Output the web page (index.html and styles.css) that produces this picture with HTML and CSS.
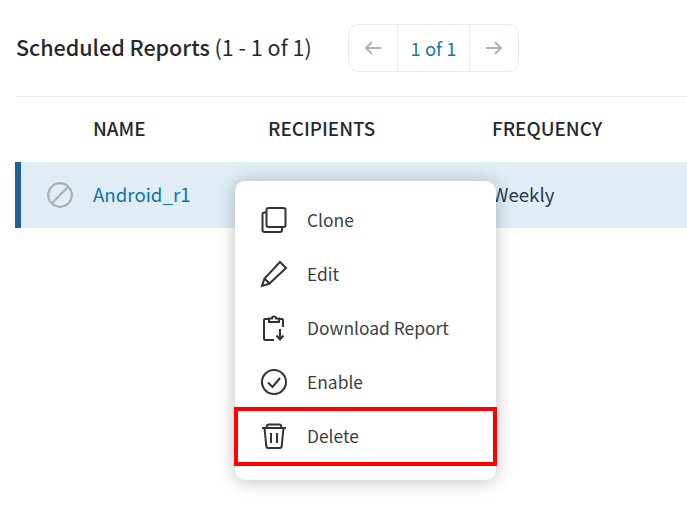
FILE: index.html
```
<!DOCTYPE html>
<html lang="en">
<head>
<meta charset="utf-8">
<title>Scheduled Reports</title>
<link rel="stylesheet" href="styles.css">
</head>
<body>
<div class="page">
  <header class="top">
    <h1 class="title">Scheduled Reports <span class="count">(1 - 1 of 1)</span></h1>
    <nav class="pager">
      <span class="pager-btn"><svg width="20" height="16" viewBox="0 0 20 16"><path d="M18 8H3M9 2 3 8l6 6" fill="none" stroke="#adb5bb" stroke-width="2"/></svg></span>
      <span class="pager-page">1 of 1</span>
      <span class="pager-btn"><svg width="20" height="16" viewBox="0 0 20 16"><path d="M2 8h15M11 2l6 6-6 6" fill="none" stroke="#adb5bb" stroke-width="2"/></svg></span>
    </nav>
  </header>
  <div class="table-head">
    <span class="col-name">NAME</span>
    <span class="col-rec">RECIPIENTS</span>
    <span class="col-freq">FREQUENCY</span>
  </div>
  <div class="row">
    <span class="row-icon"><svg width="28" height="28" viewBox="0 0 28 28"><circle cx="14" cy="14" r="11.8" fill="none" stroke="#aeaeae" stroke-width="2.2"/><path d="M5.800 22.200 22.200 5.800" stroke="#aeaeae" stroke-width="2.2"/></svg></span>
    <a class="row-name">Android_r1</a>
    <span class="row-freq">Weekly</span>
  </div>
</div>
<ul class="menu">
  <li class="menu-item"><svg class="ico" width="28" height="28" viewBox="0 0 28 28" fill="none" stroke="#333" stroke-width="2"><rect x="6.500" y="2" width="19" height="19" rx="2"/><path d="M6.500 6.500H4.500a2 2 0 0 0-2 2V24a2 2 0 0 0 2 2H20a2 2 0 0 0 2-2v-3"/></svg>Clone</li>
  <li class="menu-item"><svg class="ico" width="28" height="28" viewBox="0 0 28 28" fill="none" stroke="#333" stroke-width="2"><path d="M20 2 26 8 9.500 23.500 2 26 4.500 18.500Z"/><path d="M4.500 18.500 9.500 23.500"/></svg>Edit</li>
  <li class="menu-item"><svg class="ico" width="28" height="28" viewBox="0 0 28 28" fill="none" stroke="#333" stroke-width="2"><path d="M8 5H5a1 1 0 0 0-1 1v19a1 1 0 0 0 1 1h9M19 5h3a1 1 0 0 1 1 1v7"/><path d="M9 8V4.500h3a2 2 0 0 1 4 0h3V8Z"/><path d="M20 15v10M16.500 21.500 20 25.500l3.500-4"/></svg>Download Report</li>
  <li class="menu-item"><svg class="ico" width="28" height="28" viewBox="0 0 28 28" fill="none" stroke="#333" stroke-width="2"><circle cx="14" cy="14" r="12"/><path d="M8 14.500 12.500 19 20 10"/></svg>Enable</li>
  <li class="menu-item"><svg class="ico" width="28" height="28" viewBox="0 0 28 28" fill="none" stroke="#333" stroke-width="2"><path d="M2 6h24M7 6l-.2-1.500A2 2 0 0 1 8.800 2.500h10.400a2 2 0 0 1 2 2L21 6M4.500 6l1.800 18a2 2 0 0 0 2 2h11.400a2 2 0 0 0 2-2L23.500 6M11 11v10M17 11v10"/></svg>Delete</li>
</ul>
<div class="highlight"></div>
</body>
</html>
```

FILE: styles.css
```
* { box-sizing: border-box; }
html, body { margin: 0; padding: 0; }
body {
  width: 687px;
  height: 515px;
  overflow: hidden;
  background: #fff;
  font-family: "Noto Sans CJK JP", "Noto Sans", sans-serif;
  font-size: 18px;
  color: #2b2f33;
  position: relative;
}
.page { padding: 24px 0 0 16px; }
.top {
  display: flex;
  align-items: center;
  height: 73px;
  padding-bottom: 25px;
  border-bottom: 1px solid #e9ebec;
}
.title {
  margin: 0 0 2px;
  width: 332px;
  font-size: 21.500px;
  font-weight: 500;
  line-height: 30px;
  color: #25292d;
}
.count { font-size: 21.500px; font-weight: 400; }
.pager {
  display: flex;
  width: 171px;
  height: 48px;
  margin-bottom: 0;
  border: 1px solid #e9ebec;
  border-radius: 10px;
}
.pager-btn {
  width: 48px;
  display: flex;
  align-items: center;
  justify-content: center;
}
.pager-page {
  flex: 1;
  text-align: center;
  line-height: 46px;
  font-size: 18.400px;
  color: #1a76a8;
  border-left: 1px solid #e9ebec;
  border-right: 1px solid #e9ebec;
}
.table-head {
  display: flex;
  align-items: center;
  height: 65px;
  padding-bottom: 4px;
  font-size: 18.900px;
  font-weight: 500;
  line-height: 26px;
  color: #25292d;
}
.col-name { margin-left: 77px; width: 175px; }
.col-rec { width: 224px; }
.row {
  display: flex;
  align-items: center;
  height: 66px;
  margin-left: -1px;
  background: #e0edf5;
  border-left: 6px solid #1f5f99;
}
.row-icon { display: flex; margin-left: 25px; width: 47px; }
.row-name { width: 399px; margin-bottom: 2px; color: #0f74aa; font-size: 18.700px; line-height: 26px; }
.row-freq { margin-bottom: 2px; font-size: 18.700px; line-height: 26px; color: #2b3a47; }
.menu {
  position: absolute;
  left: 235px;
  top: 181px;
  width: 261px;
  height: 299px;
  margin: 0;
  padding: 12px 0 0 0;
  list-style: none;
  background: #fff;
  border-radius: 10px;
  box-shadow: 0 1px 18px rgba(0, 0, 0, .26);
}
.menu-item {
  display: flex;
  align-items: center;
  height: 54px;
  padding-left: 25px;
  font-size: 17.400px;
  line-height: 26px;
  color: #3c3f42;
}
.ico { margin-right: 19px; flex: none; }
.highlight {
  position: absolute;
  left: 234px;
  top: 407px;
  width: 263px;
  height: 59px;
  border: 4px solid #fe0000;
}
```
